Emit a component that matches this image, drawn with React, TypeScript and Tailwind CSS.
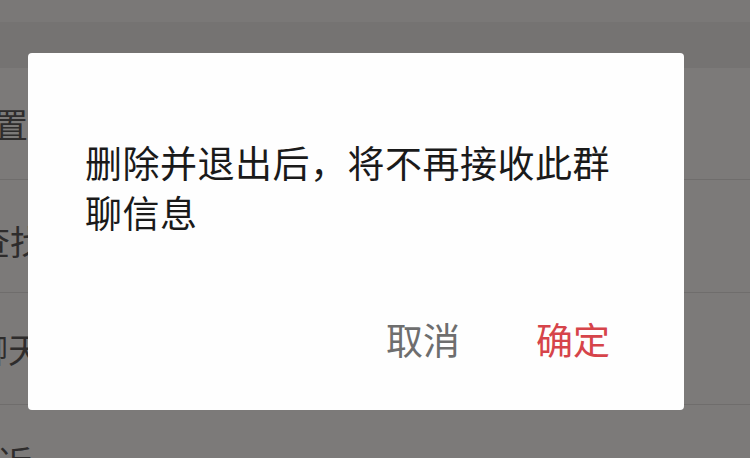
import React from "react";

const font = { fontFamily: '"Noto Sans CJK SC", "Noto Sans", sans-serif' };

export default function App() {
  return (
    <div
      className="relative w-[750px] h-[458px] overflow-hidden bg-[#7c7a79]"
      style={font}
    >
      {/* background page (dimmed) */}
      <div className="flex flex-col">
        <div className="h-[22px] bg-[#7a7877]" />
        <div className="h-[46px] bg-[#757372]" />
        <div className="h-[112px] border-b border-[#6f6d6c] flex items-center">
          <span className="ml-[-40px] text-[34px] leading-none text-[#2e2c2c]">设置</span>
        </div>
        <div className="h-[113px] border-b border-[#6f6d6c] flex items-center pt-[10px]">
          <span className="ml-[-24px] text-[34px] leading-none text-[#2e2c2c]">查找</span>
        </div>
        <div className="h-[112px] border-b border-[#6f6d6c] flex items-center">
          <span className="ml-[-26px] text-[34px] leading-none text-[#2e2c2c]">聊天</span>
        </div>
        <div className="h-[60px] flex items-start pt-[40px]">
          <span className="ml-[-2px] text-[34px] leading-none text-[#2e2c2c]">近</span>
        </div>
      </div>

      {/* dialog */}
      <div className="absolute left-[28px] top-[53px] w-[656px] h-[357px] bg-[#fefefe] rounded-[4px] flex flex-col">
        <p className="mt-[84px] ml-[57px] w-[540px] text-[37px] leading-[50px] tracking-[0.5px] text-[#1a1a1a]">
          删除并退出后，将不再接收此群聊信息
        </p>
        <div className="mt-[77px] mr-[74px] flex justify-end gap-[76px] text-[37px] leading-[50px]">
          <span className="text-[#6e6e6e]">取消</span>
          <span className="text-[#d6444a]">确定</span>
        </div>
      </div>
    </div>
  );
}
